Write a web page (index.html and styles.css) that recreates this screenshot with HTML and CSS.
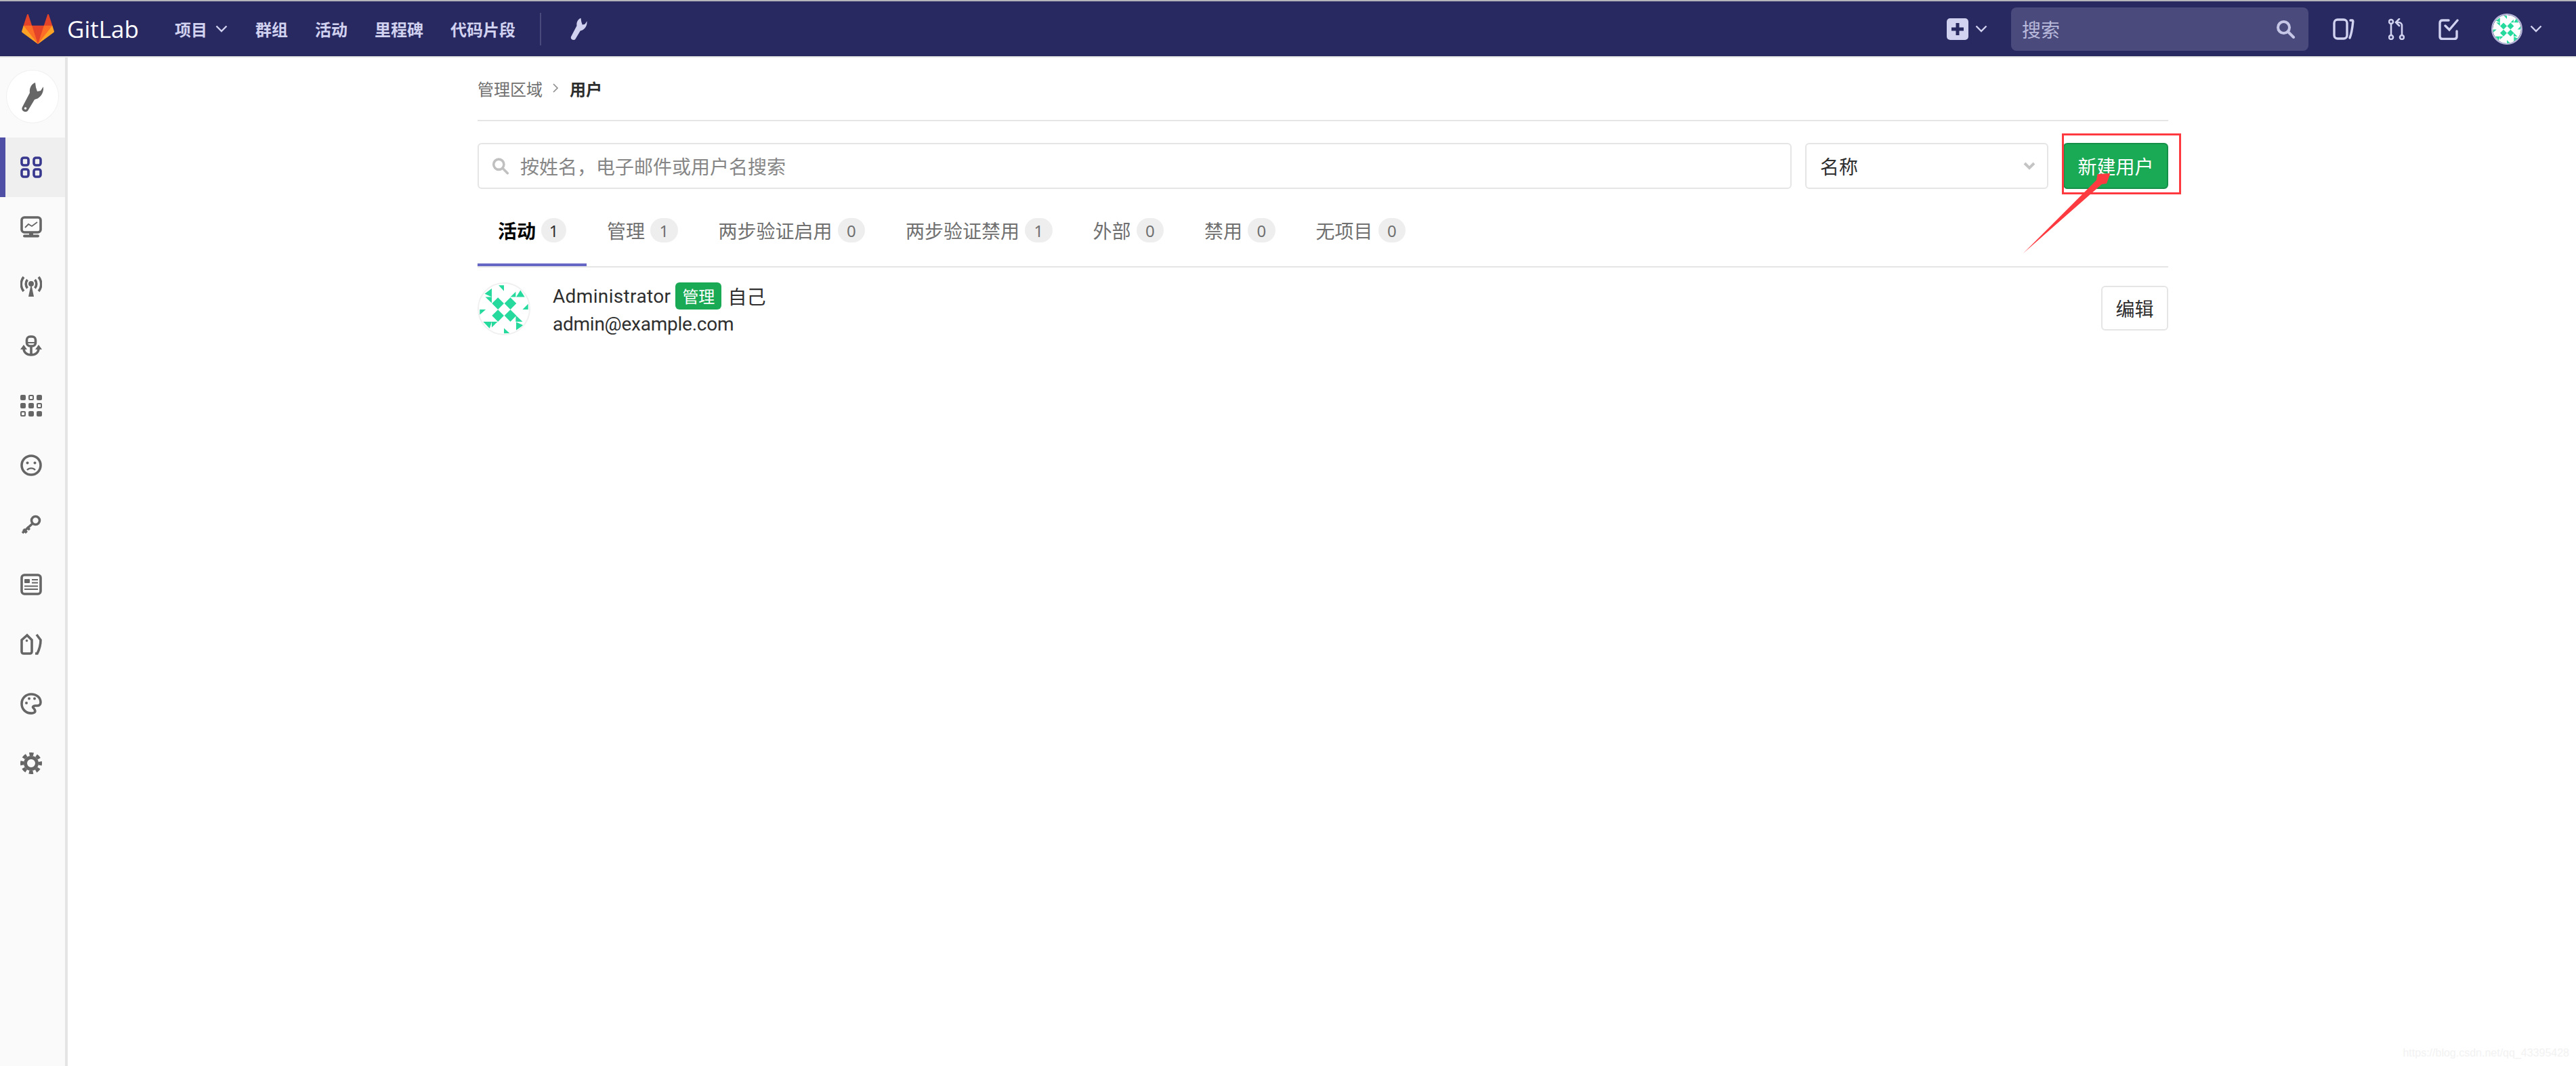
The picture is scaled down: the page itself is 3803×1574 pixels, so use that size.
FILE: index.html

```html
<!DOCTYPE html>
<html lang="zh-CN">
<head>
    <meta charset="utf-8">
    <title>用户 · 管理区域 · GitLab</title>
    <link rel="stylesheet" href="styles.css">
</head>
<body>
    <header class="navbar">
        <a class="brand">
            <svg class="brand-logo" viewBox="0 1.4 36 33">
                <path fill="#e24329" d="M2 14l9.38 9v-9l-4-12.28c-.205-.632-1.176-.632-1.38 0z"/>
                <path fill="#e24329" d="M34 14l-9.38 9v-9l4-12.28c.205-.632 1.176-.632 1.38 0z"/>
                <path fill="#e24329" d="M18 34.38L3 14h30z"/>
                <path fill="#fc6d26" d="M18 34.38L11.38 14H2l4 11z"/>
                <path fill="#fc6d26" d="M18 34.38L24.62 14H34l-4 11z"/>
                <path fill="#fca326" d="M2 14L.1 20.16c-.18.565 0 1.2.5 1.56l17.42 12.66z"/>
                <path fill="#fca326" d="M34 14l1.9 6.16c.18.565 0 1.2-.5 1.56L18 34.38z"/>
            </svg>
            <span class="brand-name">GitLab</span>
        </a>
        <nav class="nav-links">
            <a class="nav-link nav-projects">项目<svg class="chevron" viewBox="0 0 18 11"><path d="M1.5 1.5L9 9l7.5-7.5"/></svg></a>
            <a class="nav-link nav-groups">群组</a>
            <a class="nav-link nav-activity">活动</a>
            <a class="nav-link nav-milestones">里程碑</a>
            <a class="nav-link nav-snippets">代码片段</a>
        </nav>
        <div class="nav-divider"></div>
        <svg class="nav-wrench" viewBox="0 0 32 44"><path d="M20 1C14 3 11 10 12 16L1 37C-1 41 2 44 6 44C8 44 9 43 10 41L19 26C26 25 33 18 32 7L28 13L23 14L21 8Z"/></svg>

        <div class="nav-right">
            <svg class="nav-plus" viewBox="0 0 32 32"><rect width="32" height="32" rx="5" fill="#d1d1f0"/><path d="M16 7v18M7 16h18" stroke="#292961" stroke-width="5"/></svg>
            <svg class="chevron nav-plus-chevron" viewBox="0 0 18 11"><path d="M1.5 1.5L9 9l7.5-7.5"/></svg>
            <div class="nav-search">
                <span>搜索</span>
                <svg class="search-glyph" viewBox="0 0 29 28"><circle cx="11.5" cy="11.5" r="8.5"/><path d="M18 18l8 8"/></svg>
            </div>
            <svg class="nav-icon nav-issues" viewBox="0 0 32 32"><rect x="2" y="2" width="19" height="28" rx="5"/><path d="M26 3h2.5c1 0 1.500 1 1.300 2C29 13 28 22 25 29"/></svg>
            <svg class="nav-icon nav-mr" viewBox="0 0 24 32"><circle cx="4" cy="5" r="3"/><circle cx="4" cy="28" r="3"/><circle cx="20" cy="28" r="3"/><path d="M4 8v17M20 25V11c0-3-2-5-5-5h-2M16 1l-5 5 5 5"/></svg>
            <svg class="nav-icon nav-todo" viewBox="0 0 30 32"><path d="M15 3H6C3.500 3 2 4.500 2 7v20c0 2.500 1.500 3.500 4 3.500h17c2.500 0 4-1 4-3.500v-8"/><path d="M10 11l6 6L28 3"/></svg>
            <svg class="nav-avatar" viewBox="18 18 234 234"><use href="#identicon"/></svg>
            <svg class="chevron nav-user-chevron" viewBox="0 0 18 11"><path d="M1.5 1.5L9 9l7.5-7.5"/></svg>
        </div>
    </header>

    <div class="layout">
        <aside class="sidebar">
            <div class="sidebar-top">
                <svg class="sidebar-wrench" viewBox="0 0 32 44"><path d="M20 1C14 3 11 10 12 16L1 37C-1 41 2 44 6 44C8 44 9 43 10 41L19 26C26 25 33 18 32 7L28 13L23 14L21 8Z"/><circle cx="5.500" cy="39" r="1.800" fill="#fff"/></svg>
            </div>
            <ul class="sidebar-list">
                <li class="sidebar-item active">
                    <svg class="sb-icon" viewBox="0 0 32 32"><g class="line"><rect x="2" y="2" width="10" height="11" rx="3"/><rect x="20" y="2" width="10" height="11" rx="3"/><rect x="2" y="19" width="10" height="11" rx="3"/><rect x="20" y="19" width="10" height="11" rx="3"/></g></svg>
                </li>
                <li class="sidebar-item">
                    <svg class="sb-icon" viewBox="0 0 32 32"><g class="line"><rect x="2" y="2" width="28" height="22" rx="4"/></g><path class="thin" d="M7 17l5-5 5 3 8-6"/><rect x="13" y="24" width="6" height="4"/><rect x="4" y="27.500" width="24" height="4" rx="2"/></svg>
                </li>
                <li class="sidebar-item">
                    <svg class="sb-icon" viewBox="0 0 32 32"><circle cx="16" cy="12" r="4"/><path d="M16 12l-4 19h8z"/><g class="line"><path d="M10.500 6c-3 3.500-3 9 0 12.500M21.500 6c3 3.500 3 9 0 12.500M5 2c-5 6-5 15 0 21M27 2c5 6 5 15 0 21"/></g></svg>
                </li>
                <li class="sidebar-item">
                    <svg class="sb-icon" viewBox="0 0 32 32"><g class="line"><rect x="9.500" y="2" width="13" height="14" rx="5"/><path d="M16 16v13M5 19c0 6 4 10 11 10s11-4 11-10"/></g><path d="M10 10h12v2H10zM0 21l5-7 5 7zM22 21l5-7 5 7z"/></svg>
                </li>
                <li class="sidebar-item">
                    <svg class="sb-icon" viewBox="0 0 32 32">
                        <rect width="8" height="8" rx="2"/><rect class="hollow" x="13" y="1" width="6" height="6" rx="1"/><rect x="24" width="8" height="8" rx="2"/>
                        <rect y="12" width="8" height="8" rx="2"/><rect x="12" y="12" width="8" height="8" rx="2"/><rect class="hollow" x="25" y="13" width="6" height="6" rx="1"/>
                        <rect class="hollow" x="1" y="25" width="6" height="6" rx="1"/><rect x="12" y="24" width="8" height="8" rx="2"/><rect x="24" y="24" width="8" height="8" rx="2"/>
                    </svg>
                </li>
                <li class="sidebar-item">
                    <svg class="sb-icon" viewBox="0 0 32 32"><g class="line"><circle cx="16" cy="16" r="14"/><path class="thin-line" d="M10 23c3-3.500 9-3.500 12 0"/></g><circle cx="10.500" cy="12.500" r="2"/><circle cx="21.500" cy="12.500" r="2"/></svg>
                </li>
                <li class="sidebar-item">
                    <svg class="sb-icon" viewBox="0 0 32 32"><g class="line"><circle cx="22.500" cy="9.500" r="6"/><path d="M18 14L3 28"/></g><path d="M6 21l5 5-3 3-5-5zM11 18l4 4-2.500 2.500-4-4z"/></svg>
                </li>
                <li class="sidebar-item">
                    <svg class="sb-icon" viewBox="0 0 32 32"><g class="line"><rect x="2" y="2" width="28" height="28" rx="4"/></g><rect x="6" y="8" width="8" height="6" rx="1"/><path class="thin" d="M17 9h9M17 13.500h9M6 18.500h20M6 23h20" stroke-width="2"/></svg>
                </li>
                <li class="sidebar-item">
                    <svg class="sb-icon" viewBox="0 0 32 32"><g class="line"><path d="M2 10l8-7 7 7v17c0 2-1 3-3 3H5c-2 0-3-1-3-3z"/><path d="M24 2l6 8c0 7-2 14-5 20h-3"/></g><circle cx="9.500" cy="11" r="1.800"/></svg>
                </li>
                <li class="sidebar-item">
                    <svg class="sb-icon" viewBox="0 0 32 32"><g class="line"><path d="M18 30C8 31 2 24 2 16 2 8 8 2 16 2c8 0 14 5 14 12 0 3-2 5-5 5h-3c-3 0-4 2-3 3 3 3 5 7-1 8z"/></g><circle cx="9" cy="15" r="2"/><circle cx="13" cy="8.500" r="2"/><circle cx="21" cy="8.500" r="2"/></svg>
                </li>
                <li class="sidebar-item">
                    <svg class="sb-icon" viewBox="0 0 32 32"><g class="line"><circle cx="16" cy="16" r="8.500" stroke-width="5"/></g><circle class="gear-teeth" cx="16" cy="16" r="13.500"/></svg>
                </li>
            </ul>
        </aside>

        <main class="content">
            <div class="breadcrumbs">
                <span class="crumb">管理区域</span>
                <svg class="crumb-sep" viewBox="0 0 10 16"><path d="M2 2l6 6-6 6"/></svg>
                <span class="crumb-current">用户</span>
            </div>

            <div class="filter-row">
                <div class="search-field">
                    <svg class="search-glyph" viewBox="0 0 29 28"><circle cx="11.500" cy="11.500" r="8.500"/><path d="M18 18l8 8"/></svg>
                    <span>按姓名，电子邮件或用户名搜索</span>
                </div>
                <div class="sort-select">
                    <span>名称</span>
                    <svg class="sort-chevron" viewBox="0 0 18 12"><path d="M2 2l7 7 7-7"/></svg>
                </div>
                <a class="btn-new">新建用户</a>
            </div>

            <ul class="tabs">
                <li class="tab active">活动<span class="count">1</span></li>
                <li class="tab">管理<span class="count">1</span></li>
                <li class="tab">两步验证启用<span class="count">0</span></li>
                <li class="tab">两步验证禁用<span class="count">1</span></li>
                <li class="tab">外部<span class="count">0</span></li>
                <li class="tab">禁用<span class="count">0</span></li>
                <li class="tab">无项目<span class="count">0</span></li>
            </ul>

            <div class="user-row">
                <svg class="user-avatar" viewBox="18 18 234 234">
                    <defs>
                        <g id="identicon">
                            <circle cx="135" cy="135" r="117" fill="#fff"/>
                            <g fill="#26d99c">
                                <path d="M107 82l28 28-28 28-28-28zM165 82l28 28-28 28-28-28zM107 139l28 28-28 28-28-28zM165 139l28 28-28 28-28-28z"/>
                                <path d="M110 25h25v27zM78 40v40l-33-15zM48 80h30v28zM190 55v25h-25zM212 48l20 32h-40zM248 112v26h-26zM22 138h28l-28 25zM38 195h40l-10 32zM78 195h27l-27 27zM190 165l32 30h-32zM192 197l33 15-33 23zM135 225l27 25h-27z"/>
                            </g>
                        </g>
                    </defs>
                    <use href="#identicon"/>
                </svg>
                <div class="user-info">
                    <div class="user-name"><span class="user-fullname">Administrator</span><span class="admin-badge">管理</span><span class="self-tag">自己</span></div>
                    <div class="user-email">admin@example.com</div>
                </div>
                <a class="btn-edit">编辑</a>
            </div>
        </main>
    </div>

    <!-- annotation drawn over the screenshot -->
    <div class="callout-box"></div>
    <svg class="callout-arrow" viewBox="0 0 250 200"><polygon points="7,184 115,76 116.500,67 135.500,66 130,81 123,82"/></svg>
    <div class="watermark">https://blog.csdn.net/qq_43395428</div>
</body>
</html>
```

FILE: styles.css

```css
* {
    box-sizing: border-box;
}
html, body {
    margin: 0;
    height: 1574px;
    overflow: hidden;
}
body {
    position: relative;
    background: #fff;
    color: #2e2e2e;
    font-family: Roboto, "Noto Sans CJK SC", sans-serif;
    font-size: 28px;
}
ul {
    list-style: none;
    margin: 0;
    padding: 0;
}

/* top bar */
.navbar {
    display: flex;
    align-items: center;
    height: 85px;
    padding-left: 32px;
    background: #292961;
    border-top: 2px solid #b4b4ba;
    border-bottom: 2px solid #e5e5e5;
    color: #d1d1f0;
}
.brand {
    display: flex;
    align-items: center;
}
.brand-logo {
    width: 48px;
    height: 44px;
}
.brand-name {
    margin-left: 19px;
    color: #fff;
    font-family: "Open Sans", sans-serif;
    font-size: 35px;
    width: 103px;
}
.nav-links {
    display: flex;
    align-items: center;
    margin-left: 56px;
}
.nav-link {
    display: flex;
    align-items: center;
    font-family: "Noto Sans CJK SC", sans-serif;
    font-size: 24px;
    font-weight: 700;
}
.nav-groups {
    margin-left: 41px;
}
.nav-activity,
.nav-milestones,
.nav-snippets {
    margin-left: 40px;
}
.chevron {
    width: 18px;
    height: 11px;
    fill: none;
    stroke: #d1d1f0;
    stroke-width: 2.4;
}
.nav-projects .chevron {
    margin-left: 12px;
}
.nav-divider {
    width: 2px;
    height: 48px;
    margin-left: 36px;
    background: #4a4a7c;
}
.nav-wrench {
    width: 25px;
    height: 33px;
    margin-left: 43px;
    fill: #d1d1f0;
}
.nav-right {
    display: flex;
    align-items: center;
    margin-left: auto;
    padding-right: 50px;
}
.nav-plus {
    width: 32px;
    height: 32px;
}
.nav-plus-chevron {
    margin-left: 10px;
}
.nav-search {
    display: flex;
    align-items: center;
    justify-content: space-between;
    width: 439px;
    height: 64px;
    margin-left: 35px;
    padding: 0 19px 0 16px;
    border-radius: 8px;
    background: #4a4a7d;
    color: #b9b9db;
    font-family: "Noto Sans CJK SC", sans-serif;
    font-size: 28px;
}
.search-glyph {
    width: 29px;
    height: 28px;
    fill: none;
    stroke: #c6c6e6;
    stroke-width: 4;
    stroke-linecap: round;
}
.nav-icon {
    height: 32px;
    fill: none;
    stroke: #d1d1f0;
    stroke-width: 3.4;
    stroke-linecap: round;
}
.nav-issues {
    width: 32px;
    margin-left: 36px;
}
.nav-mr {
    width: 24px;
    margin-left: 50px;
    stroke-width: 2.6;
}
.nav-todo {
    width: 30px;
    margin-left: 50px;
}
.nav-avatar {
    width: 46px;
    height: 46px;
    margin-left: 48px;
    border-radius: 50%;
    border: 2px solid #b7b7da;
}
.nav-user-chevron {
    margin-left: 11px;
}

/* page */
.layout {
    display: flex;
    height: 1489px;
}
.sidebar {
    flex: none;
    width: 100px;
    border-right: 4px solid #e5e5e5;
    background: #fafafa;
}
.sidebar-top {
    display: flex;
    align-items: center;
    justify-content: center;
    width: 76px;
    height: 77px;
    margin: 19px 0 22px 10px;
    border-radius: 50%;
    background: #fff;
    box-shadow: 0 0 0 1px #f0f0f0;
}
.sidebar-wrench {
    width: 32px;
    height: 44px;
    fill: #666;
}
.sidebar-item {
    display: flex;
    align-items: center;
    height: 88px;
    padding-left: 30px;
}
.sidebar-item.active {
    padding-left: 22px;
    border-left: 8px solid #4f4fa5;
    background: #efefef;
}
.sb-icon {
    width: 32px;
    height: 32px;
    fill: #666;
}
.sb-icon .line {
    fill: none;
    stroke: #666;
    stroke-width: 3.6;
}
.sb-icon .thin {
    fill: none;
    stroke: #666;
    stroke-width: 1.8;
}
.sb-icon .thin-line {
    stroke-width: 2.4;
}
.sb-icon .hollow {
    fill: none;
    stroke: #666;
    stroke-width: 2;
}
.sb-icon .gear-teeth {
    fill: none;
    stroke: #666;
    stroke-width: 5;
    stroke-dasharray: 6.1 4.5;
    stroke-dashoffset: 3.05;
}
.sidebar-item.active .sb-icon .line {
    stroke: #38388f;
}

.content {
    flex: none;
    width: 2496px;
    margin-left: 605px;
}
.breadcrumbs {
    display: flex;
    align-items: center;
    height: 94px;
    padding-bottom: 2px;
    border-bottom: 2px solid #e5e5e5;
    font-family: "Noto Sans CJK SC", sans-serif;
    font-size: 24px;
}
.crumb {
    color: #707070;
}
.crumb-sep {
    width: 10px;
    height: 16px;
    margin: 0 16px 0 14px;
    fill: none;
    stroke: #8c8c8c;
    stroke-width: 1.6;
}
.crumb-current {
    font-weight: 700;
}

.filter-row {
    display: flex;
    gap: 20px;
    height: 68px;
    margin-top: 32px;
    font-family: "Noto Sans CJK SC", sans-serif;
}
.search-field {
    display: flex;
    align-items: center;
    width: 1940px;
    padding-left: 19px;
    border: 2px solid #e5e5e5;
    border-radius: 6px;
    color: #868686;
}
.search-field .search-glyph {
    width: 26px;
    height: 26px;
    margin-right: 16px;
    stroke: #c0c0c0;
}
.sort-select {
    display: flex;
    align-items: center;
    justify-content: space-between;
    width: 359px;
    padding: 0 17px 0 20px;
    border: 2px solid #e5e5e5;
    border-radius: 6px;
}
.sort-chevron {
    width: 18px;
    height: 12px;
    fill: none;
    stroke: #c4c4c4;
    stroke-width: 4;
}
.btn-new {
    display: flex;
    align-items: center;
    justify-content: center;
    flex: 1;
    margin-left: 2px;
    border: 2px solid #168f48;
    border-radius: 6px;
    background: #1aaa55;
    color: #fff;
}

.tabs {
    display: flex;
    margin-top: 8px;
    border-bottom: 2px solid #e5e5e5;
    font-family: "Noto Sans CJK SC", sans-serif;
    color: #707070;
}
.tab {
    display: flex;
    align-items: center;
    height: 106px;
    padding: 0 30px;
}
.tab.active {
    font-weight: 700;
    color: #000;
    box-shadow: inset 0 -4px 0 #6666c4;
}
.count {
    display: flex;
    align-items: center;
    justify-content: center;
    width: 40.5px;
    height: 36px;
    margin-left: 8px;
    border-radius: 18px;
    background: #eee;
    color: #707070;
    font-family: "Noto Sans", sans-serif;
    font-size: 24px;
    font-weight: 400;
}
.tab.active .count {
    width: 37px;
    color: #2e2e2e;
}

.user-row {
    display: flex;
    align-items: flex-start;
    padding-top: 22px;
}
.user-avatar {
    flex: none;
    width: 78px;
    height: 78px;
    margin-right: 33px;
    border-radius: 50%;
    border: 2px solid #f0f0f0;
}
.user-name {
    display: flex;
    align-items: center;
    height: 40px;
}
.user-fullname {
    letter-spacing: 0.35px;
}
.admin-badge {
    margin-left: 7px;
    padding: 0 10px;
    height: 40px;
    border-radius: 6px;
    background: #1aaa55;
    color: #fff;
    font-family: "Noto Sans CJK SC", sans-serif;
    font-size: 24px;
    line-height: 40px;
}
.self-tag {
    margin-left: 9px;
    font-family: "Noto Sans CJK SC", sans-serif;
}
.user-email {
    margin-top: 2px;
    line-height: 40px;
    letter-spacing: -0.25px;
}
.btn-edit {
    display: flex;
    align-items: center;
    justify-content: center;
    width: 99px;
    height: 66px;
    margin: 5px 0 0 auto;
    border: 2px solid #e5e5e5;
    border-radius: 6px;
    font-family: "Noto Sans CJK SC", sans-serif;
}

/* red annotation, sits over the page */
.callout-box {
    position: absolute;
    left: 3044px;
    top: 197px;
    width: 176px;
    height: 90px;
    border: 3px solid #fc3a3f;
}
.callout-arrow {
    position: absolute;
    left: 2980px;
    top: 190px;
    width: 250px;
    height: 200px;
    fill: #fc3a3f;
}
.watermark {
    position: absolute;
    right: 10px;
    bottom: 10px;
    color: #f2f2f2;
    font-family: "Liberation Sans", sans-serif;
    font-size: 16px;
}
```
